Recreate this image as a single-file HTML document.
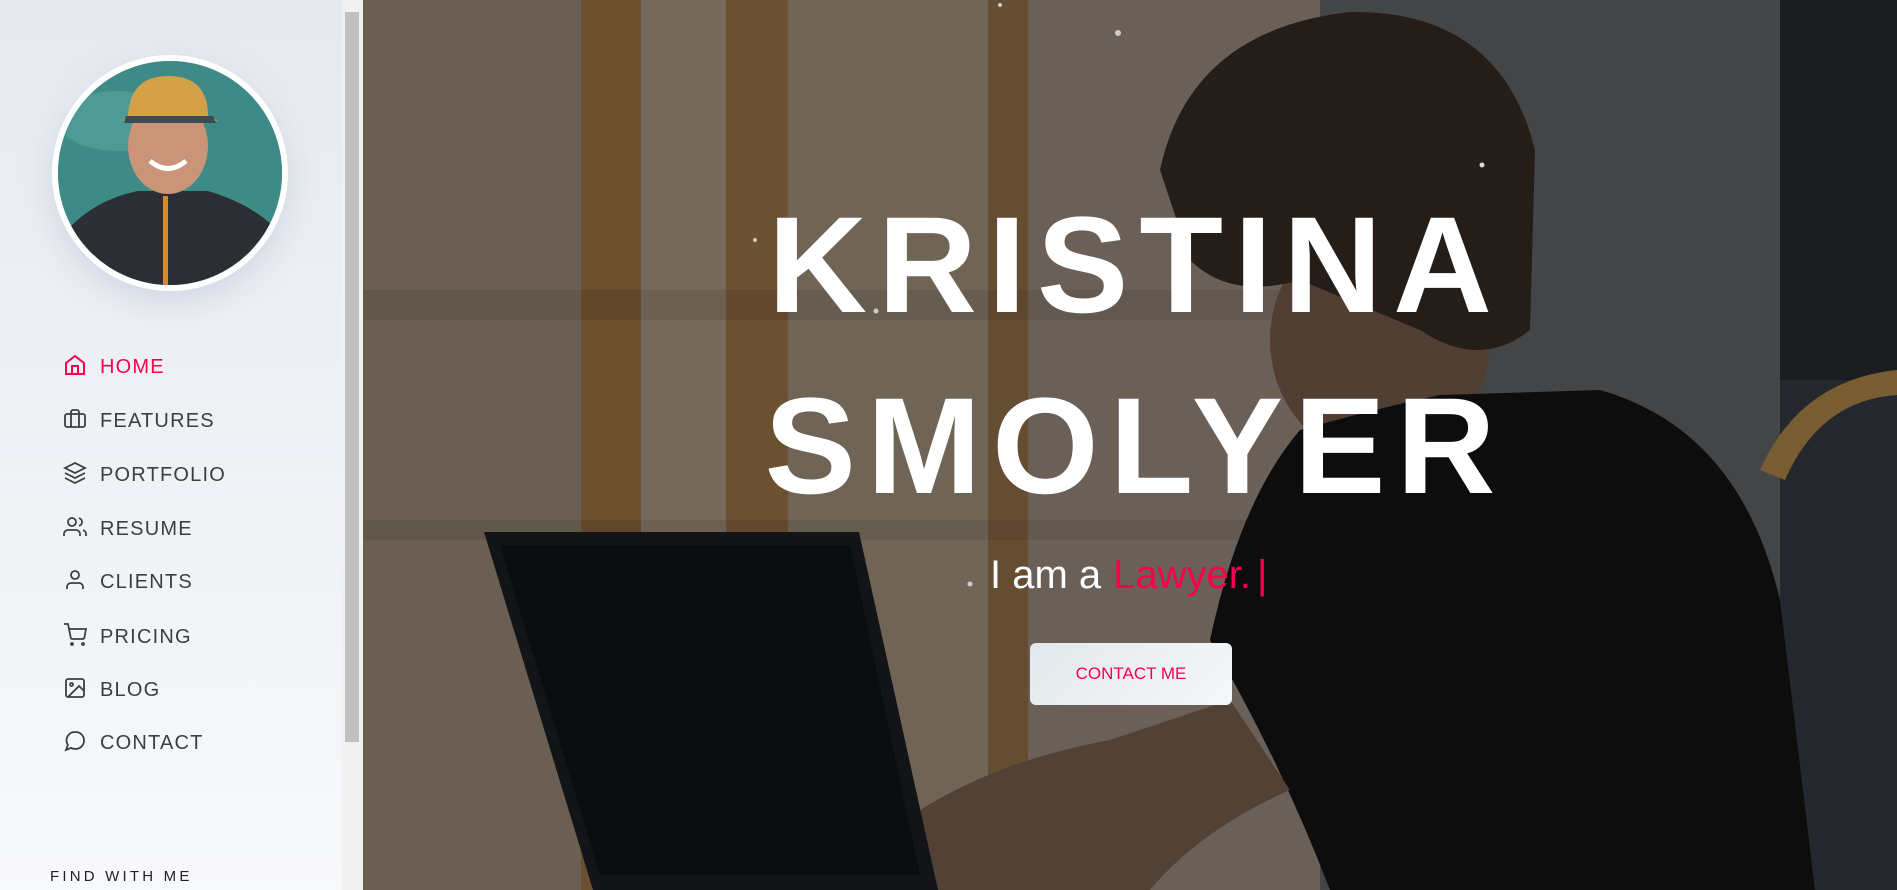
<!DOCTYPE html>
<html><head><meta charset="utf-8"><style>
*{margin:0;padding:0;box-sizing:border-box}
body{width:1897px;height:890px;overflow:hidden;position:relative;font-family:"Liberation Sans",sans-serif;background:#fff}
#side{position:absolute;left:0;top:0;width:342px;height:890px;background:linear-gradient(180deg,#e6eaef 0%,#eef1f5 50%,#f8f9fb 100%)}
#sb{position:absolute;left:342px;top:0;width:21px;height:890px;background:#f1f1f1}
#thumb{position:absolute;left:345px;top:12px;width:14px;height:730px;background:#c1c1c1}
.av{position:absolute;left:52px;top:55px;width:236px;height:236px;border-radius:50%;border:6px solid #fff;box-shadow:0 10px 30px rgba(160,170,200,.35);overflow:hidden;background:#3f8f8a}
nav a{position:absolute;left:100px;font-size:20px;letter-spacing:1.2px;color:#3c3e41;text-decoration:none}
nav svg{position:absolute;left:-37px;top:-3px}
.find{position:absolute;left:50px;top:868px;font-size:15px;letter-spacing:3.2px;color:#1f2125}
#main{position:absolute;left:363px;top:0;width:1534px;height:890px;overflow:hidden}
.t{position:absolute;left:0;width:1534px;text-align:center;color:#fff;font-weight:bold;font-size:137px;letter-spacing:11px;text-indent:11px;line-height:1}
.sub{position:absolute;left:627px;top:553px;font-size:40px;color:#fff;font-weight:300}
.sub span{color:#f9004d;margin-left:12px}
.btn{position:absolute;left:667px;top:643px;width:202px;height:62px;border-radius:6px;background:linear-gradient(135deg,#e2e8ec,#f5f7fa);color:#f9004d;font-size:17px;text-align:center;line-height:62px}
</style></head><body>
<div id="side">
<div class="av"><svg width="224" height="224" viewBox="0 0 224 224">
<rect width="224" height="224" fill="#3e8a86"/>
<ellipse cx="60" cy="60" rx="60" ry="30" fill="#5aa6a0" opacity=".6"/>
<path d="M0 224 L0 180 Q30 140 80 130 L150 130 Q200 145 224 175 L224 224Z" fill="#2b2f33"/>
<rect x="105" y="135" width="5" height="89" fill="#d58a2a"/>
<ellipse cx="110" cy="85" rx="40" ry="48" fill="#c99478"/>
<path d="M70 55 Q72 15 110 15 Q150 15 150 55 L160 60 L65 60Z" fill="#d4a048"/>
<path d="M68 55 L155 55 L158 62 L66 62Z" fill="#3e4a52"/>
<path d="M92 100 Q110 115 128 100" stroke="#fff" stroke-width="5" fill="none"/>
</svg></div>
<nav>
<a style="top:356px;color:#f9004d"><svg width="24" height="24" viewBox="0 0 24 24" fill="none" stroke="#f9004d" stroke-width="2"><path d="M3 10 L12 3 L21 10 V21 H3Z M9 21 V13 H15 V21"/></svg>HOME</a>
<a style="top:410px"><svg width="24" height="24" viewBox="0 0 24 24" fill="none" stroke="#3c3e41" stroke-width="1.8"><rect x="2" y="7" width="20" height="13" rx="2"/><path d="M16 20V5a2 2 0 0 0-2-2h-4a2 2 0 0 0-2 2v15"/></svg>FEATURES</a>
<a style="top:464px"><svg width="24" height="24" viewBox="0 0 24 24" fill="none" stroke="#3c3e41" stroke-width="1.8"><path d="M12 2 2 7l10 5 10-5-10-5zM2 17l10 5 10-5M2 12l10 5 10-5"/></svg>PORTFOLIO</a>
<a style="top:518px"><svg width="24" height="24" viewBox="0 0 24 24" fill="none" stroke="#3c3e41" stroke-width="1.8"><path d="M17 21v-2a4 4 0 0 0-4-4H5a4 4 0 0 0-4 4v2"/><circle cx="9" cy="7" r="4"/><path d="M23 21v-2a4 4 0 0 0-3-3.87M16 3.13a4 4 0 0 1 0 7.75"/></svg>RESUME</a>
<a style="top:571px"><svg width="24" height="24" viewBox="0 0 24 24" fill="none" stroke="#3c3e41" stroke-width="1.8"><path d="M20 21v-2a4 4 0 0 0-4-4H8a4 4 0 0 0-4 4v2"/><circle cx="12" cy="7" r="4"/></svg>CLIENTS</a>
<a style="top:626px"><svg width="24" height="24" viewBox="0 0 24 24" fill="none" stroke="#3c3e41" stroke-width="1.8"><circle cx="9" cy="21" r="1"/><circle cx="20" cy="21" r="1"/><path d="M1 1h4l2.7 13.4a2 2 0 0 0 2 1.6h9.7a2 2 0 0 0 2-1.6L23 6H6"/></svg>PRICING</a>
<a style="top:679px"><svg width="24" height="24" viewBox="0 0 24 24" fill="none" stroke="#3c3e41" stroke-width="1.8"><rect x="3" y="3" width="18" height="18" rx="2"/><circle cx="8.5" cy="8.5" r="1.5"/><path d="M21 15l-5-5L5 21"/></svg>BLOG</a>
<a style="top:732px"><svg width="24" height="24" viewBox="0 0 24 24" fill="none" stroke="#3c3e41" stroke-width="1.8"><path d="M21 11.5a8.4 8.4 0 0 1-9 8.4 8.4 8.4 0 0 1-4-1L3 21l1.9-5A8.4 8.4 0 0 1 12 3a8.4 8.4 0 0 1 9 8.5z"/></svg>CONTACT</a>
</nav>
<div class="find">FIND WITH ME</div>
</div>
<div id="sb"></div><div id="thumb"></div>
<div id="main">
<svg width="1534" height="890" viewBox="363 0 1534 890" style="position:absolute;left:0;top:0">
<rect x="363" y="0" width="1534" height="890" fill="#6e6154"/>
<rect x="363" y="0" width="220" height="890" fill="#7a6c5e"/>
<rect x="581" y="0" width="60" height="890" fill="#7a5a36"/>
<rect x="641" y="0" width="85" height="890" fill="#867868"/>
<rect x="726" y="0" width="62" height="890" fill="#7a5c3a"/>
<rect x="788" y="0" width="200" height="890" fill="#807264"/>
<rect x="988" y="0" width="40" height="890" fill="#74583a"/>
<rect x="1028" y="0" width="310" height="890" fill="#7a6e64"/>
<rect x="1320" y="0" width="460" height="890" fill="#4d4f51"/>
<rect x="1780" y="0" width="117" height="890" fill="#1e2024"/>
<rect x="1780" y="380" width="117" height="510" fill="#2a2e34"/>
<rect x="363" y="290" width="980" height="30" fill="#000" opacity=".08"/>
<rect x="363" y="520" width="980" height="20" fill="#000" opacity=".08"/>
<path d="M1760 470 Q1800 380 1897 370 L1897 395 Q1820 400 1785 480Z" fill="#8a6a3a"/>
<ellipse cx="1380" cy="340" rx="110" ry="120" fill="#5d473b"/>
<path d="M1160 170 Q1190 30 1350 12 Q1500 10 1535 150 L1530 330 Q1480 370 1420 330 L1300 280 Q1230 300 1190 260Z" fill="#2a211c"/>
<path d="M1210 640 Q1240 500 1300 430 Q1370 410 1440 395 L1600 390 Q1740 430 1780 600 L1815 890 L1330 890 Q1280 760 1210 640Z" fill="#0f0f10"/>
<path d="M920 810 Q1000 760 1110 740 L1230 700 L1290 790 Q1200 830 1150 890 L920 890Z" fill="#5e4a3d"/>
<path d="M484 532 L859 532 L938 890 L593 890Z" fill="#15171b"/>
<path d="M500 545 L850 545 L920 875 L600 875Z" fill="#0c0e11"/>
<rect x="363" y="0" width="1534" height="890" fill="#000" opacity=".12"/>
<circle cx="1118" cy="33" r="3" fill="#ccc"/><circle cx="1000" cy="5" r="2" fill="#ccc"/><circle cx="1482" cy="165" r="2.5" fill="#ddd"/><circle cx="755" cy="240" r="2" fill="#ccc"/><circle cx="876" cy="311" r="2.5" fill="#ccc"/><circle cx="970" cy="584" r="2.5" fill="#ccc"/>
</svg>
<div class="t" style="top:197px">KRISTINA</div>
<div class="t" style="top:378px">SMOLYER</div>
<div class="sub">I am a<span>Lawyer.</span><span style="margin-left:6px;font-weight:100">|</span></div>
<div class="btn">CONTACT ME</div>
</div>
</body></html>
